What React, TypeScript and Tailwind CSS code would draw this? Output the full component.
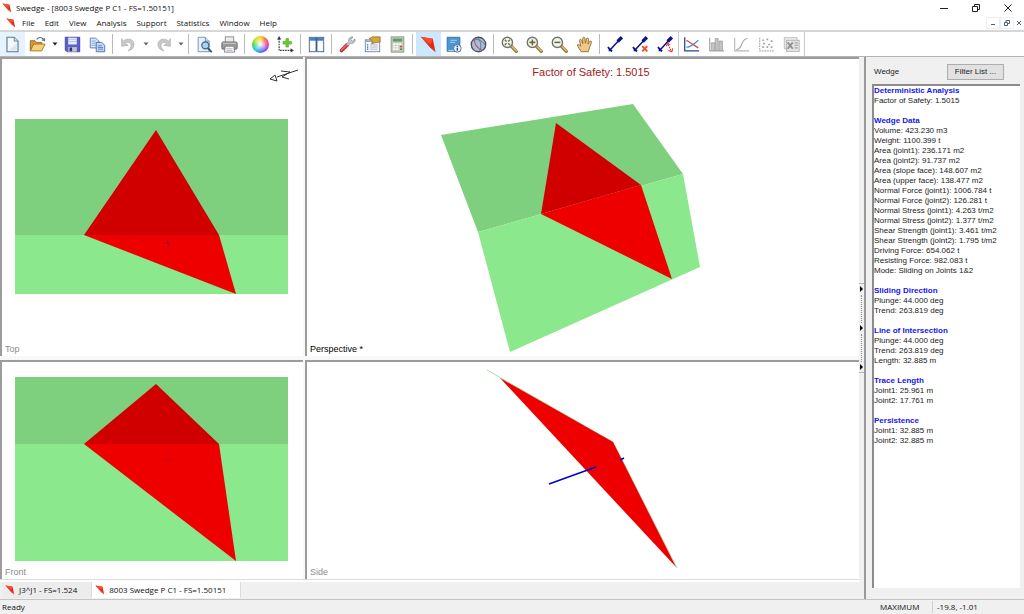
import { ReactNode, useState } from "react";

type Result = { title: string; rows: string[] };

const menus = ["File", "Edit", "View", "Analysis", "Support", "Statistics", "Window", "Help"];

const results: Result[] = [
    { title: "Deterministic Analysis", rows: ["Factor of Safety: 1.5015"] },
    {
        title: "Wedge Data",
        rows: [
            "Volume: 423.230 m3",
            "Weight: 1100.399 t",
            "Area (joint1): 236.171 m2",
            "Area (joint2): 91.737 m2",
            "Area (slope face): 148.607 m2",
            "Area (upper face): 138.477 m2",
            "Normal Force (joint1): 1006.784 t",
            "Normal Force (joint2): 126.281 t",
            "Normal Stress (joint1): 4.263 t/m2",
            "Normal Stress (joint2): 1.377 t/m2",
            "Shear Strength (joint1): 3.461 t/m2",
            "Shear Strength (joint2): 1.795 t/m2",
            "Driving Force: 654.062 t",
            "Resisting Force: 982.083 t",
            "Mode: Sliding on Joints 1&2",
        ],
    },
    { title: "Sliding Direction", rows: ["Plunge: 44.000 deg", "Trend: 263.819 deg"] },
    { title: "Line of Intersection", rows: ["Plunge: 44.000 deg", "Trend: 263.819 deg", "Length: 32.885 m"] },
    { title: "Trace Length", rows: ["Joint1: 25.961 m", "Joint2: 17.761 m"] },
    { title: "Persistence", rows: ["Joint1: 32.885 m", "Joint2: 32.885 m"] },
];

const WedgeLogo = ({ className }: { className: string }) => (
    <svg viewBox="0 0 12 12" className={className} aria-hidden="true">
        <path d="M0.5 0.5 L9 2 L11 11.5 Z" fill="#ee2410" />
        <path d="M0.5 0.5 L7.5 6 L9 2 Z" fill="#ff4a2e" />
        <path d="M0.5 0.5 L11 11.5 L7 8 Z" fill="#8c1408" />
    </svg>
);

const Magnifier = ({ children }: { children: ReactNode }) => (
    <>
        <path d="M12 12 L18 18" stroke="#8a6a2a" strokeWidth="3.6" strokeLinecap="round" />
        <path d="M12.5 12 L18 17.5" stroke="#e0bb70" strokeWidth="1.8" strokeLinecap="round" />
        <circle cx="7.5" cy="7.5" r="6" fill="#eef6f4" stroke="#6e7467" strokeWidth="1.6" />
        {children}
    </>
);

// dumbbell shaped measuring arrow shared by the three bolt tools
const Bolt = () => (
    <>
        <path d="M3 17 L16 3" stroke="#11118c" strokeWidth="1.8" />
        <path d="M12.5 6.5 L17.5 1.5" stroke="#11118c" strokeWidth="4" />
        <path d="M1 13 L6 18" stroke="#11118c" strokeWidth="2" />
        <path d="M2 18 L2 14 L6 18 Z" fill="#11118c" />
    </>
);

const icons: Record<string, ReactNode> = {
    New: (
        <>
            <path d="M3.5 1.5 H12 L16.5 6 V18.5 H3.5 Z" fill="#f4f8fd" stroke="#61748b" strokeWidth="1.3" />
            <path d="M12 1.5 V6 H16.5" fill="#d3e0ee" stroke="#61748b" />
            <path d="M15 8 V17 H6 Z" fill="#dae6f3" />
        </>
    ),
    Open: (
        <>
            <path d="M1.5 17.5 V5.5 H7 L9 7.5 H15 V10 L5 11 Z" fill="#d69a2c" stroke="#84622a" />
            <path d="M1.5 17.5 L5.5 9.5 H19 L15 17.5 Z" fill="#f8cf72" stroke="#9a7228" />
            <path d="M9 4 C11 1 15 1 17 4" fill="none" stroke="#56739a" strokeWidth="1.4" />
            <path d="M18.8 2 V6.5 L14.8 5 Z" fill="#56739a" />
        </>
    ),
    Save: (
        <>
            <path d="M1.5 1.5 H18.5 V18.5 H3.5 L1.5 16.5 Z" fill="#5a5fd0" stroke="#3a3fa0" />
            <rect x="5" y="2" width="10" height="8" fill="#e9eefc" />
            <path d="M5 4 H15 M5 6.5 H15" stroke="#b4bde8" />
            <rect x="5" y="13" width="10" height="5.5" fill="#bfc4cf" />
            <rect x="6.5" y="13.5" width="3" height="4.5" fill="#2d3280" />
        </>
    ),
    Copy: (
        <>
            <path d="M1.5 2.5 H8 L11.5 6 V14 H1.5 Z" fill="#d9e8fa" stroke="#4b74ac" />
            <path d="M3 6 H8 M3 8.5 H8 M3 11 H8" stroke="#7ea2d3" />
            <path d="M8.5 7.5 H15 L18.5 11 V18.5 H8.5 Z" fill="#c2d9f6" stroke="#3f68a2" />
            <path d="M10.5 11.5 H15 M10.5 13.5 H16.5 M10.5 15.5 H16.5" stroke="#4d7ab9" />
        </>
    ),
    Undo: (
        <path
            d="M2 3 L3.5 6.5 C8 1.5 16.5 3.5 16.5 10 C16.5 14 13.5 16.5 9.5 17.5 C12 15 13.5 13 13 10.5 C12.5 7 8.5 6.5 6.5 9 L9.5 11 L2 12 Z"
            fill="#c9c9c9"
            stroke="#aaaaaa"
            strokeWidth="0.8"
        />
    ),
    Redo: (
        <path
            d="M18 3 L16.5 6.5 C12 1.5 3.5 3.5 3.5 10 C3.5 14 6.5 16.5 10.5 17.5 C8 15 6.5 13 7 10.5 C7.5 7 11.5 6.5 13.5 9 L10.5 11 L18 12 Z"
            fill="#c9c9c9"
            stroke="#aaaaaa"
            strokeWidth="0.8"
        />
    ),
    "Print Preview": (
        <>
            <path d="M2.5 1.5 H11 L15.5 6 V18.5 H2.5 Z" fill="#e8f1fb" stroke="#6b87a8" />
            <path d="M11 1.5 V6 H15.5" fill="#d3e0ee" stroke="#6b87a8" />
            <circle cx="11" cy="11" r="4.2" fill="#abd2f0" stroke="#3c6184" strokeWidth="1.4" />
            <path d="M14 14.5 L18.5 19" stroke="#3c536d" strokeWidth="2.4" />
        </>
    ),
    Print: (
        <>
            <rect x="5" y="1" width="10" height="8" fill="#ececec" stroke="#858585" />
            <rect x="1" y="7" width="18" height="8.5" rx="1.5" fill="#999a9c" stroke="#5d5e60" />
            <path d="M2 8.5 H18" stroke="#d9d9d9" />
            <path d="M5 12 H15 L16 19 H4 Z" fill="#fafafa" stroke="#7d7d7d" />
            <path d="M6.5 15 H13.5 M6.5 17 H13.5" stroke="#a7b5c7" />
        </>
    ),
    "Add Axes": (
        <>
            <path d="M2.5 3 V17 H17" fill="none" stroke="#3c3c3c" strokeWidth="1.4" strokeDasharray="2 1" />
            <path d="M2.5 0 L5 4 H0 Z M20 17 L16 14.5 V19.5 Z" fill="#3c3c3c" />
            <path
                d="M10.5 3 H13.5 V6.5 H17 V9.5 H13.5 V13 H10.5 V9.5 H7 V6.5 H10.5 Z"
                fill="#6cc934"
                stroke="#4ca324"
                strokeWidth="0.7"
            />
        </>
    ),
    "Tile Views": (
        <>
            <rect x="1.5" y="1.5" width="17" height="17" fill="#eaf2fc" stroke="#3b5b8c" />
            <rect x="2" y="2" width="16" height="3.5" fill="#4a7fc4" />
            <path d="M10 2 V18" stroke="#3b5b8c" strokeWidth="2" />
            <path d="M3 6.5 H8 V17 H3 Z M12 6.5 H17 V17 H12 Z" fill="#ffffff" />
        </>
    ),
    "Project Settings": (
        <>
            <path d="M3 17 L9.5 10.5" stroke="#b82a2d" strokeWidth="4.4" strokeLinecap="round" />
            <path d="M3 16.5 L9 10.5" stroke="#ef6664" strokeWidth="2" strokeLinecap="round" />
            <path
                d="M8.5 9.5 L11.5 6.5 C10.5 3.5 13 0.5 16.5 1.2 L13.8 4 L15.8 6.2 L18.8 3.5 C19.5 7 16.5 9.5 13.5 8.6 L10.5 11.5 Z"
                fill="#c9cdd2"
                stroke="#767b82"
                strokeWidth="0.8"
            />
        </>
    ),
    "Input Data": (
        <>
            <rect x="1.5" y="4.5" width="17" height="14" fill="#f3f7fc" stroke="#6b7f9a" />
            <path d="M2 6 H18" stroke="#8aa6cb" strokeWidth="2" />
            <path d="M7 10.5 H16 M7 13 H16 M7 15.5 H16" stroke="#a6b2c2" />
            <path d="M3.5 10.5 H5 M3.5 13 H5 M3.5 15.5 H5" stroke="#3d68a4" strokeWidth="1.4" />
            <path d="M6 3 L10 1 H19 V7 L13 8 L9 9 L10 6 Z" fill="#d7a637" stroke="#876523" strokeWidth="0.8" />
        </>
    ),
    Compute: (
        <>
            <rect x="2.5" y="1" width="15" height="18" fill="#c6cbc2" stroke="#8d9289" />
            <rect x="4.5" y="3" width="11" height="3.5" fill="#57a657" />
            <path d="M5 9.5 H15 M5 12.5 H15 M5 15.5 H15" stroke="#ffffff" strokeWidth="2" strokeDasharray="2.5 1" />
            <path d="M12.5 12.5 H15.5" stroke="#cf4b3f" strokeWidth="2" />
            <path d="M12.5 15.5 H15.5" stroke="#4f8b46" strokeWidth="2" />
        </>
    ),
    "Info Viewer": (
        <>
            <path d="M2.5 1.5 H17.5 V18 H2.5 Z" fill="#4b94ce" stroke="#2c70a9" />
            <path d="M4 17 H17" stroke="#d6e9f6" />
            <path d="M6 5 H14 M6 7.5 H12" stroke="#b7daf2" />
            <circle cx="14.5" cy="14.5" r="4.5" fill="#eef4fc" stroke="#45669a" />
            <path d="M14.5 13.8 V17.3" stroke="#1f50b0" strokeWidth="1.7" />
            <circle cx="14.5" cy="12.2" r="1" fill="#1f50b0" />
        </>
    ),
    Stereonet: (
        <>
            <circle cx="10" cy="10" r="8.5" fill="#a9bfd8" stroke="#4b4f58" strokeWidth="1.6" />
            <path d="M6 2.5 C4 8 7 14 15 17" fill="none" stroke="#c8506c" strokeWidth="1.3" />
            <path d="M3 6 C8 2 14 5 18 11 M9 2 C13 6 14 13 11 18" fill="none" stroke="#5b6c92" />
        </>
    ),
    "Zoom Extents": (
        <Magnifier>
            <path
                d="M4.5 4.5 L6.5 6.5 M10.5 4.5 L8.5 6.5 M4.5 10.5 L6.5 8.5 M10.5 10.5 L8.5 8.5"
                stroke="#7a6a31"
                strokeWidth="1.6"
            />
        </Magnifier>
    ),
    "Zoom In": (
        <Magnifier>
            <path d="M4 7.5 H11 M7.5 4 V11" stroke="#75662f" strokeWidth="1.8" />
        </Magnifier>
    ),
    "Zoom Out": (
        <Magnifier>
            <path d="M4 7.5 H11" stroke="#75662f" strokeWidth="1.8" />
        </Magnifier>
    ),
    Pan: (
        <path
            d="M6 18.5 C4.5 15.5 2 13 1.5 10.5 C2.5 9.5 4 10.5 5.5 12 L4 5 C4.5 3.5 6 3.5 6.5 5 L8 9 L7.8 2.5 C8.5 1 10 1 10.5 2.5 L11 8.5 L12.5 3 C13.5 2 14.8 2.5 14.8 4 L14 9.5 L16.5 6 C18 5.5 18.5 6.5 18 8 L15.5 15 L14.5 18.5 Z"
            fill="#eec884"
            stroke="#8b6530"
        />
    ),
    "Add Bolt": <Bolt />,
    "Delete Bolt": (
        <>
            <Bolt />
            <path d="M12 12 L18 18 M18 12 L12 18" stroke="#ef4a2a" strokeWidth="2.2" />
        </>
    ),
    "Edit Bolt": (
        <>
            <Bolt />
            <path d="M13 10 L17 18" stroke="#ef2a2a" strokeWidth="1.2" strokeDasharray="2 1" />
            <path d="M11 12 L12.5 8.5 L15.5 10.5 M13.5 17 L17.5 18.5 L18.5 14.5" fill="none" stroke="#ef2a2a" strokeWidth="1.2" />
        </>
    ),
    "Plot Sensitivity": (
        <>
            <path d="M2 1.5 V17.5 H19" fill="none" stroke="#24498e" strokeWidth="1.5" />
            <path d="M4 5 L18 14" stroke="#df4545" strokeWidth="1.5" />
            <path d="M4 13 C9 14 13 9 18 5" fill="none" stroke="#3f8fd0" strokeWidth="1.5" />
        </>
    ),
    Histogram: (
        <>
            <path d="M2 2 V17.5 H19" fill="none" stroke="#a8a8a8" strokeWidth="1.4" />
            <path d="M4 8 H8 V17 H4 Z M8.5 3 H12 V17 H8.5 Z M13 6 H17 V17 H13 Z" fill="#c4c4c4" stroke="#a0a0a0" strokeWidth="0.9" />
        </>
    ),
    Cumulative: (
        <>
            <path d="M2 2 V17.5 H19" fill="none" stroke="#b5b5b5" strokeWidth="1.3" />
            <path d="M4 16 C12 16 8 4 17 3" fill="none" stroke="#a5a5a5" strokeWidth="1.3" />
        </>
    ),
    Scatter: (
        <>
            <path d="M2 2 V17.5 H19" fill="none" stroke="#ababab" strokeWidth="1.3" strokeDasharray="2 1" />
            <path
                d="M5 5 H7 M10 4 H12 M15 6 H17 M6 9 H8 M12 10 H14 M5 13 H7 M10 13 H12 M15 13 H17"
                stroke="#a0a0a0"
                strokeWidth="2"
            />
        </>
    ),
    "Export to Excel": (
        <>
            <rect x="1.5" y="2" width="15" height="13" fill="#ededed" stroke="#b8b8b8" />
            <rect x="4" y="5" width="15" height="13" fill="#e6e6e6" stroke="#ababab" />
            <path d="M5.5 7.5 L11.5 15 M11.5 7.5 L5.5 15" stroke="#8f8f8f" strokeWidth="2.2" />
            <path d="M13.5 8 H17.5 M13.5 11 H17.5 M13.5 14 H17.5" stroke="#a8a8a8" strokeWidth="1.4" />
        </>
    ),
};

const ToolButton = ({ name, active, hot }: { name: string; active?: boolean; hot?: boolean }) => (
    <button
        type="button"
        aria-label={name}
        title={name}
        className={`flex h-full w-[25px] shrink-0 items-center justify-center ${active ? "bg-[#cce8ff]" : hot ? "bg-[#e5f3ff]" : ""}`}
    >
        {name === "Display Options" ? (
            <span className="h-[17px] w-[17px] rounded-full bg-[radial-gradient(circle,white,transparent_65%),conic-gradient(#f9d71c,#ff5a36,#e6399b,#8a48e8,#2d7ff0,#25c7d9,#3fd348,#c4e62c,#f9d71c)]" />
        ) : name === "Wedge Display" ? (
            <WedgeLogo className="h-[17px] w-[17px]" />
        ) : (
            <svg viewBox="0 0 20 20" fill="none" className="h-[17px] w-[17px]">
                {icons[name]}
            </svg>
        )}
    </button>
);

const Caret = ({ label }: { label: string }) => (
    <button type="button" aria-label={label} className="flex h-full w-[10px] shrink-0 items-center justify-center">
        <svg viewBox="0 0 6 4" className="h-1 w-1.5">
            <path d="M0.5 0.5 H5.5 L3 3.5 Z" fill={label === "Open recent" ? "#222222" : "#666666"} />
        </svg>
    </button>
);

const Separator = () => (
    <span className="flex h-full w-1.5 shrink-0 pl-0.5 items-center">
        <span className="h-5 w-px bg-[#b8b8b8]" />
    </span>
);

type ViewProps = { label: string; box: string; caption?: string; active?: boolean; children: ReactNode };

const View = ({ label, box, caption, active, children }: ViewProps) => (
    <section
        aria-label={label}
        className="relative min-h-0 min-w-0 border-t-2 border-l-2 border-[#9c9c9c] bg-white font-['Liberation_Sans',Arial,sans-serif]"
    >
        <svg viewBox={box} fill="none" className="absolute inset-0 h-full w-full">
            {children}
        </svg>
        {caption && <p className="absolute inset-x-0 top-1.5 pl-4 text-center text-[11px] leading-[14px] text-[#a01c1c]">{caption}</p>}
        <span className={`absolute bottom-px left-[3px] text-[9px] leading-3 ${active ? "text-black" : "text-[#8c8c8c]"}`}>{label}</span>
    </section>
);

const Toolbar = () => (
    <div role="toolbar" aria-label="Main toolbar" className="flex h-6 shrink-0 items-center overflow-hidden bg-white">
        <ToolButton name="New" hot />
        <ToolButton name="Open" />
        <Caret label="Open recent" />
        <ToolButton name="Save" />
        <ToolButton name="Copy" />
        <Separator />
        <ToolButton name="Undo" />
        <Caret label="Undo list" />
        <ToolButton name="Redo" />
        <Caret label="Redo list" />
        <Separator />
        <ToolButton name="Print Preview" />
        <ToolButton name="Print" />
        <Separator />
        <ToolButton name="Display Options" />
        <ToolButton name="Add Axes" />
        <Separator />
        <ToolButton name="Tile Views" />
        <Separator />
        <ToolButton name="Project Settings" />
        <ToolButton name="Input Data" />
        <ToolButton name="Compute" />
        <Separator />
        <ToolButton name="Wedge Display" active />
        <ToolButton name="Info Viewer" />
        <ToolButton name="Stereonet" />
        <Separator />
        <ToolButton name="Zoom Extents" />
        <ToolButton name="Zoom In" />
        <ToolButton name="Zoom Out" />
        <ToolButton name="Pan" />
        <Separator />
        <ToolButton name="Add Bolt" />
        <ToolButton name="Delete Bolt" />
        <ToolButton name="Edit Bolt" />
        <span className="h-full w-px shrink-0 bg-[#c8c8c8]" />
        <ToolButton name="Plot Sensitivity" />
        <ToolButton name="Histogram" />
        <ToolButton name="Cumulative" />
        <ToolButton name="Scatter" />
        <ToolButton name="Export to Excel" />
        <span className="h-full w-px shrink-0 bg-[#c8c8c8]" />
    </div>
);

const Views = () => (
    <div className="grid min-h-0 flex-1 grid-cols-[303fr_554fr] grid-rows-[299fr_219fr] gap-x-0.5 gap-y-1 border-b border-[#dddddd] bg-[#f8f8f8]">
        <View label="Top" box="0 0 301 297">
            <rect x="13" y="60" width="273" height="116" fill="#7ecf7e" />
            <rect x="13" y="176" width="273" height="59" fill="#8ce88c" />
            <path d="M154 71 L217 176 H82 Z" fill="#d00000" />
            <path d="M82 176 H217 L234 235 Z" fill="#ee0000" />
            <path d="M165 183 L167 186" stroke="#0000c8" />
            {/* north arrow */}
            <path d="M296 11 L275 18 M268 20 L273 16 L275 22 Z M279 12 L288 13 L280 18 L287 20" stroke="#333333" />
        </View>
        <View label="Perspective *" box="0 0 552 297" caption="Factor of Safety: 1.5015" active>
            <path d="M134 76 L326 45 L376 115 L171 173 Z" fill="#7ecf7e" />
            <path d="M376 115 L393 208 L203 293 L171 173 Z" fill="#8ce88c" />
            <path d="M249 64 L334 126 L234 155 Z" fill="#d00000" />
            <path d="M334 126 L365 220 L234 155 Z" fill="#ee0000" />
        </View>
        <View label="Front" box="0 0 301 217">
            <rect x="13" y="15" width="273" height="67" fill="#7ecf7e" />
            <rect x="13" y="82" width="273" height="117" fill="#8ce88c" />
            <path d="M154 22 L217 82 H82 Z" fill="#d00000" />
            <path d="M82 82 H217 L234 199 Z" fill="#ee0000" />
            <path d="M165 97 H167" stroke="#6a0050" />
        </View>
        <View label="Side" box="0 0 552 217">
            <path d="M180 8 L306 80 L370 206" stroke="#a4dfa0" />
            <path d="M193 16 L306 80 L369 205 Z" fill="#ee0000" />
            <path d="M242 122 L289 105 M313 98 L317 96" stroke="#0000c8" strokeWidth="1.5" />
        </View>
    </div>
);

const Splitter = () => (
    <div className="flex w-[7px] shrink-0 flex-col items-center border-r-2 border-[#9a9a9a]">
        <div className="flex-1" />
        <div className="flex h-[90px] w-full shrink-0 flex-col items-center justify-between border-y border-[#b5b5b5] py-0.5">
            {[0, 1, 2].map((step) => (
                <svg key={step} viewBox="0 0 3 6" className="h-1.5 w-[3px]">
                    <path d="M0 0 L3 3 L0 6 Z" fill="#000000" />
                </svg>
            )).flatMap((arrow, index) =>
                index < 2 ? [arrow, <span key={`dots-${index}`} className="h-7 border-l border-dotted border-[#8f8f8f]" />] : [arrow]
            )}
        </div>
        <div className="flex-1" />
    </div>
);

const InfoPanel = () => (
    <aside className="flex w-[158px] shrink-0 flex-col pt-[7px] pr-1 pb-[11px] pl-1.5 font-['Liberation_Sans',Arial,sans-serif] text-[8px] leading-[10px] text-[#222222]">
        <div className="mb-1 flex items-center justify-between pr-4 pl-0.5">
            <span>Wedge</span>
            <button type="button" className="h-4 w-[57px] border border-[#adadad] bg-[#e1e1e1]">
                Filter List ...
            </button>
        </div>
        <div className="min-h-0 flex-1 overflow-hidden border-t-2 border-l-2 border-[#8c8c8c] bg-white">
            {results.map((group) => (
                <section key={group.title} className="mb-2.5">
                    <h2 className="font-bold text-[#1414f0]">{group.title}</h2>
                    {group.rows.map((row) => (
                        <p key={row} className="whitespace-nowrap">
                            {row}
                        </p>
                    ))}
                </section>
            ))}
        </div>
    </aside>
);

export default function App() {
    const [doc, setDoc] = useState(1);
    const docs = ["J3^J1 - FS=1.524", "8003 Swedge P C1 - FS=1.50151"];

    return (
        <div className="flex h-screen flex-col overflow-hidden bg-[#f0f0f0] font-['Open_Sans','Noto_Sans',sans-serif] text-[8px] leading-3 text-[#111111]">
            <header className="flex h-4 shrink-0 items-center bg-white pl-0.5">
                <WedgeLogo className="h-2.5 w-2.5" />
                <h1 className="ml-1 flex-1">Swedge - [8003 Swedge P C1 - FS=1.50151]</h1>
                <button type="button" aria-label="Minimize" className="flex h-4 w-8 items-center justify-center">
                    <svg viewBox="0 0 8 8" className="h-2 w-2" stroke="#222222">
                        <path d="M0 4.5 H8" />
                    </svg>
                </button>
                <button type="button" aria-label="Restore" className="flex h-4 w-8 items-center justify-center">
                    <svg viewBox="0 0 8 8" fill="none" className="h-2 w-2" stroke="#222222">
                        <path d="M0.5 2.5 H5.5 V7.5 H0.5 Z M2.5 2.5 V0.5 H7.5 V5.5 H5.5" />
                    </svg>
                </button>
                <button type="button" aria-label="Close" className="flex h-4 w-8 items-center justify-center">
                    <svg viewBox="0 0 8 8" className="h-2 w-2" stroke="#222222">
                        <path d="M0.5 0.5 L7.5 7.5 M7.5 0.5 L0.5 7.5" />
                    </svg>
                </button>
            </header>

            <nav className="flex h-4 shrink-0 items-center border-b-2 border-[#d6d6d6] bg-white pl-1.5">
                <WedgeLogo className="h-2.5 w-2.5" />
                <div className="flex flex-1 gap-2.5 pl-1.5">
                    {menus.map((menu) => (
                        <button key={menu} type="button">
                            {menu}
                        </button>
                    ))}
                </div>
                <button type="button" aria-label="Minimize document" className="flex h-3 w-3.5 items-center justify-center border border-[#eeeeee]">
                    <svg viewBox="0 0 6 6" className="h-1.5 w-1.5" stroke="#51606f">
                        <path d="M1 4.5 H5" />
                    </svg>
                </button>
                <button type="button" aria-label="Restore document" className="flex h-3 w-3.5 items-center justify-center border border-[#eeeeee]">
                    <svg viewBox="0 0 6 6" fill="none" className="h-1.5 w-1.5" stroke="#51606f">
                        <path d="M0.5 2.5 H3.5 V5.5 H0.5 Z M2 2 V0.5 H5.5 V3.5 H4" />
                    </svg>
                </button>
                <button type="button" aria-label="Close document" className="flex h-3 w-2.5 items-center justify-center">
                    <svg viewBox="0 0 6 6" className="h-1.5 w-1.5" stroke="#51606f">
                        <path d="M1 1 L5 5 M5 1 L1 5" />
                    </svg>
                </button>
            </nav>

            <Toolbar />

            <div className="flex min-h-0 flex-1 border-t border-[#b4b4b4]">
                <main className="flex min-w-0 flex-1 flex-col">
                    <Views />
                    <div role="tablist" className="flex h-[19px] shrink-0 items-stretch border-t-2 border-white pb-px pl-0.5">
                        {docs.map((name, index) => (
                            <button
                                key={name}
                                type="button"
                                role="tab"
                                aria-selected={doc === index}
                                onClick={() => setDoc(index)}
                                className={`flex items-center gap-1 border-r border-[#dcdcdc] pr-3.5 pl-[3px] ${doc === index ? "bg-white" : "bg-[#ececec]"}`}
                            >
                                <WedgeLogo className="h-2.5 w-2.5" />
                                {name}
                            </button>
                        ))}
                    </div>
                </main>
                <Splitter />
                <InfoPanel />
            </div>

            <footer className="flex h-[15px] shrink-0 items-center border-t border-[#c4c4c4] pl-0.5">
                <span className="flex-1">Ready</span>
                <span className="w-[52px]">MAXIMUM</span>
                <span className="w-[92px] border-l border-[#d0d0d0] pl-1">-19.8, -1.01</span>
            </footer>
        </div>
    );
}
